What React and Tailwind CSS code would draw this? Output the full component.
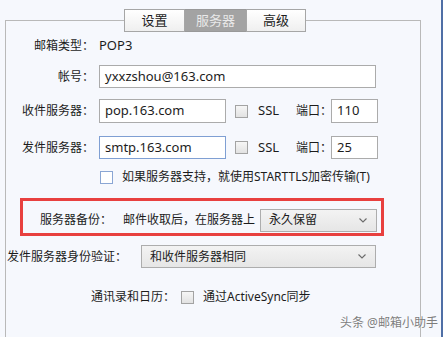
const font = "font-['Noto_Sans','Noto_Sans_CJK_SC',sans-serif]";

function Chevron() {
  return (
    <svg width="8" height="5" viewBox="0 0 8 5" className="shrink-0">
      <path d="M0.5 0.5 L4 4 L7.5 0.5" fill="none" stroke="#6b6b6b" strokeWidth="1.1" />
    </svg>
  );
}

function Box({ blue }) {
  return (
    <div
      className={
        blue
          ? "w-[13px] h-[13px] border border-[#8aa6d4] bg-white shrink-0"
          : "w-[13px] h-[13px] border border-[#a3a3a3] bg-gradient-to-b from-[#f6f6f6] to-[#e2e2e2] shrink-0"
      }
    />
  );
}

function Label({ children }) {
  return <div className="w-[88px] shrink-0 text-right whitespace-nowrap">{children}</div>;
}

function Field({ value, w, blue }) {
  return (
    <div
      className={
        "h-full flex items-center px-[5px] bg-white text-[13px] border " +
        (blue ? "border-[#7f9fd3]" : "border-[#ababab]")
      }
      style={{ width: w }}
    >
      {value}
    </div>
  );
}

function Select({ value, w }) {
  return (
    <div
      className="h-[23px] flex items-center justify-between pl-[8px] pr-[9px] border border-[#adadad] bg-gradient-to-b from-[#f3f3f3] to-[#e6e6e6]"
      style={{ width: w }}
    >
      <span>{value}</span>
      <Chevron />
    </div>
  );
}

export default function App() {
  return (
    <div className={"relative w-[443px] h-[337px] overflow-hidden bg-[#f6f8fd] border-r-2 border-[#4f6fa6] text-[12px] text-[#1c1c1c] " + font}>
      <div className="pt-[20px] pl-[5px]">
        <div className="w-[416px] h-[317px] border-t border-x border-[#b9b9b9] flex flex-col">
          {/* Tabs */}
          <div className="-mt-[12px] ml-[118px] flex h-[23px] text-[13px]">
            <div className="w-[61px] flex items-center justify-center border border-[#a6a6a6] bg-gradient-to-b from-white to-[#efefef]">设置</div>
            <div className="w-[61px] flex items-center justify-center border-y border-[#999] bg-[#a3a3a3] text-[#e9e9e9]">服务器</div>
            <div className="w-[60px] flex items-center justify-center border border-[#a6a6a6] bg-gradient-to-b from-white to-[#efefef]">高级</div>
          </div>

          {/* Mail type */}
          <div className="mt-[6px] h-[16px] flex items-center">
            <Label>邮箱类型：</Label>
            <span className="ml-[5px] text-[13px]">POP3</span>
          </div>

          {/* Account */}
          <div className="mt-[11px] h-[23px] flex items-center">
            <Label>帐号：</Label>
            <div className="ml-[5px] h-full">
              <Field value="yxxzshou@163.com" w={277} />
            </div>
          </div>

          {/* Incoming */}
          <div className="mt-[11px] h-[24px] flex items-center">
            <Label>收件服务器：</Label>
            <div className="ml-[5px] h-full">
              <Field value="pop.163.com" w={127} />
            </div>
            <div className="ml-[9px]"><Box /></div>
            <span className="ml-[10px] text-[13px]">SSL</span>
            <span className="ml-[17px]">端口：</span>
            <div className="ml-[-1px] h-full">
              <Field value="110" w={47} />
            </div>
          </div>

          {/* Outgoing */}
          <div className="mt-[13px] h-[23px] flex items-center">
            <Label>发件服务器：</Label>
            <div className="ml-[5px] h-full">
              <Field value="smtp.163.com" w={127} blue />
            </div>
            <div className="ml-[9px]"><Box /></div>
            <span className="ml-[10px] text-[13px]">SSL</span>
            <span className="ml-[17px]">端口：</span>
            <div className="ml-[-1px] h-full">
              <Field value="25" w={47} />
            </div>
          </div>

          {/* STARTTLS */}
          <div className="mt-[11px] h-[14px] flex items-center pl-[94px]">
            <Box blue />
            <span className="ml-[9px]">如果服务器支持，就使用STARTTLS加密传输(T)</span>
          </div>

          {/* Backup (highlighted) */}
          <div className="mt-[14px] ml-[14px] w-[364px] h-[38px] border-[3px] border-[#e8403f] flex items-center pt-[6px]">
            <span className="ml-[17px]">服务器备份：</span>
            <span className="ml-[11px]">邮件收取后，在服务器上</span>
            <div className="ml-[5px]">
              <Select value="永久保留" w={117} />
            </div>
          </div>

          {/* Auth */}
          <div className="mt-[9px] h-[23px] flex items-center pl-[1px]">
            <span className="w-[134px]">发件服务器身份验证：</span>
            <Select value="和收件服务器相同" w={235} />
          </div>

          {/* Contacts */}
          <div className="mt-[21px] h-[16px] flex items-center pl-[85px]">
            <span>通讯录和日历：</span>
            <div className="ml-[6px]"><Box /></div>
            <span className="ml-[9px]">通过ActiveSync同步</span>
          </div>
        </div>
      </div>

      {/* Watermark */}
      <div className="absolute left-[340px] top-[314px] text-[12px] text-[#7d7d7d] whitespace-nowrap [text-shadow:0_0_2px_#fff]">
        头条 @邮箱小助手
      </div>
    </div>
  );
}
